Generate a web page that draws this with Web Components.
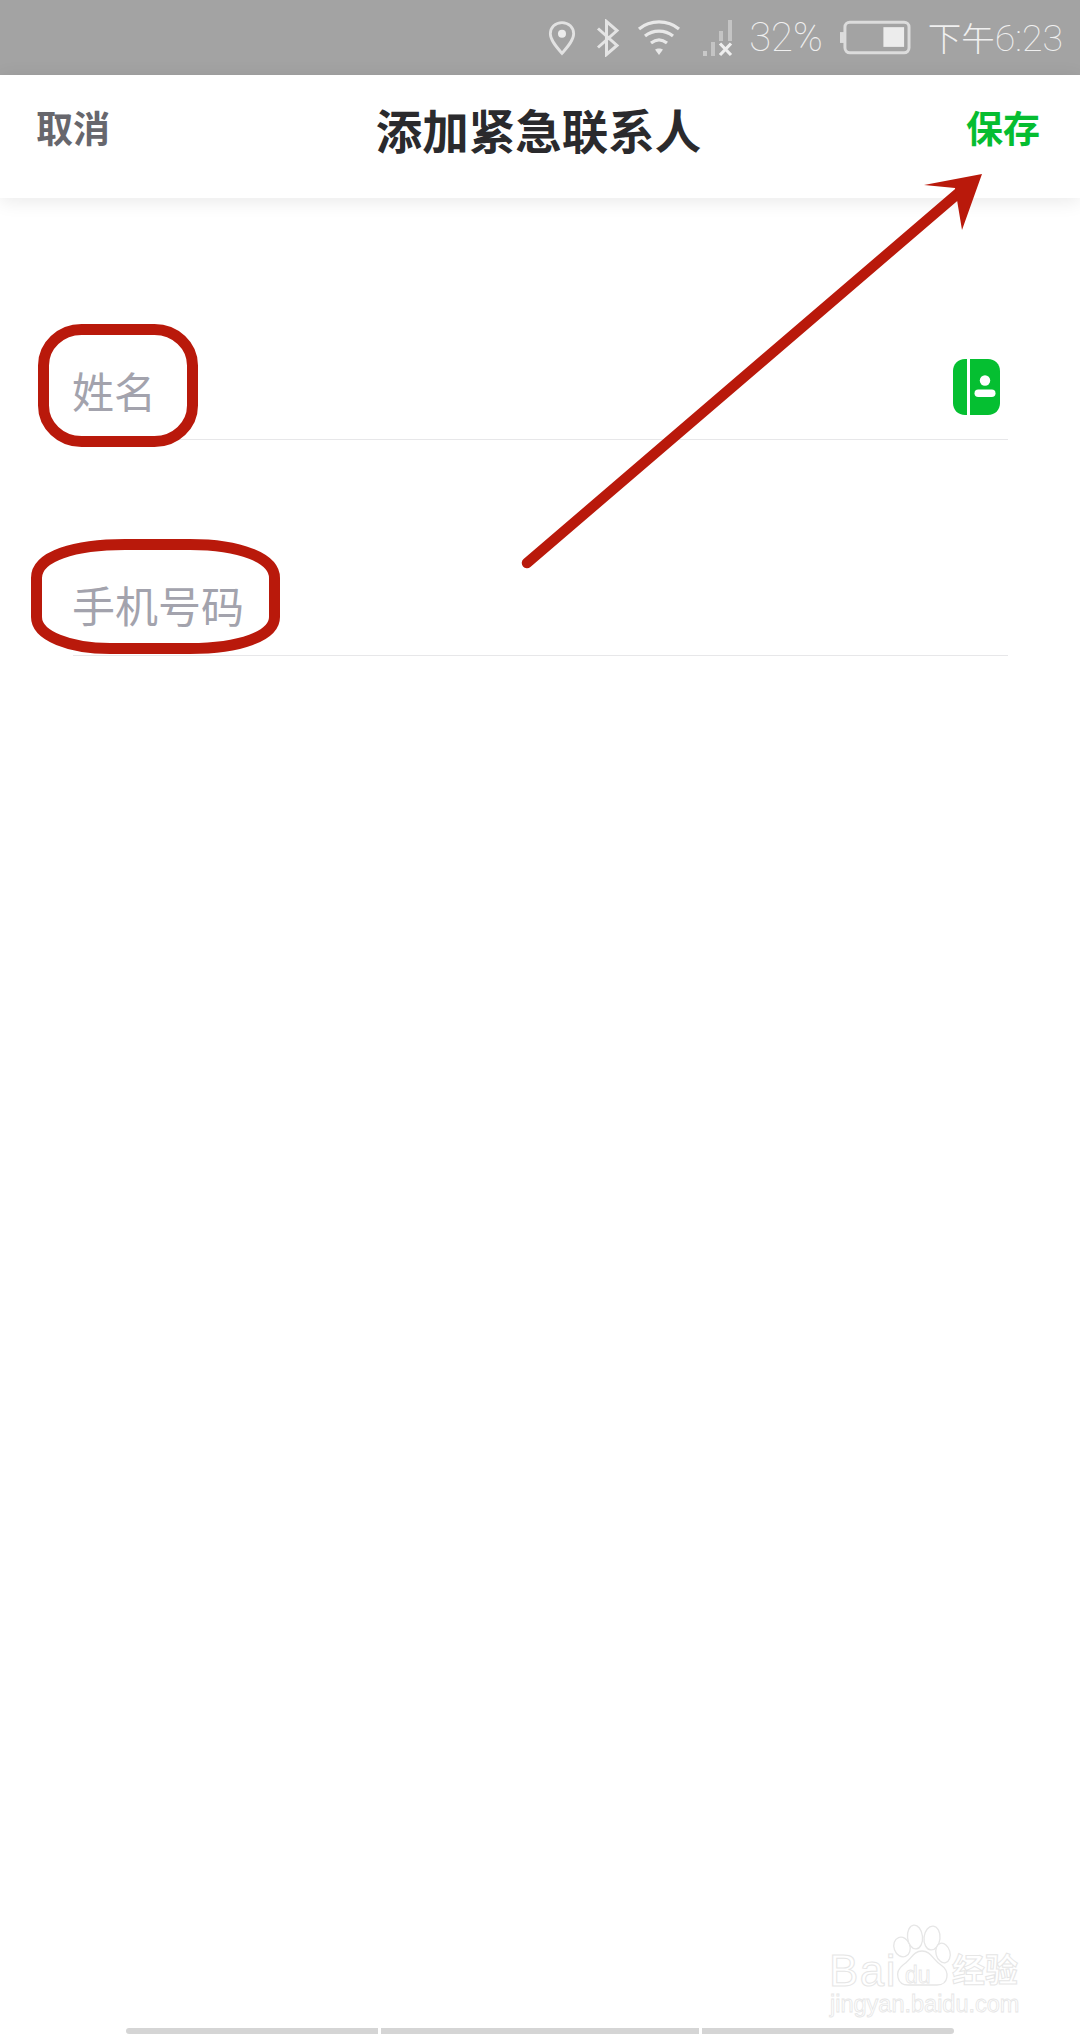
<!DOCTYPE html>
<html lang="zh"><head><meta charset="utf-8"><title>添加紧急联系人</title>
<style>
html,body{margin:0;padding:0;background:#fff}
body{width:1080px;height:2040px;overflow:hidden;position:relative;font-family:"Noto Sans CJK SC","Liberation Sans",sans-serif}
</style></head><body>
<app-page>
  <status-bar></status-bar>
  <nav-bar cancel="取消" title-text="添加紧急联系人" save="保存"></nav-bar>
  <form-list>
    <form-field label="姓名" contact style="--h:242px;--fs:42px;--pb:24px"></form-field>
    <form-field label="手机号码" style="--h:216px;--fs:43px;--pb:26px"></form-field>
  </form-list>
  <home-bars></home-bars>
</app-page>
<baidu-mark></baidu-mark>
<red-notes></red-notes>
<script>
function def(name, html){
  customElements.define(name, class extends HTMLElement{
    connectedCallback(){
      if(this.shadowRoot) return;
      const r=this.attachShadow({mode:'open'});
      r.innerHTML=typeof html==='function'?html(this):html;
    }
  });
}
def('app-page',`<style>:host{display:flex;flex-direction:column;height:2040px}</style><slot></slot>`);
def('status-bar',`<style>
:host{display:flex;align-items:center;justify-content:flex-end;height:75px;background:#a3a3a3;color:#f0f0f0;padding-right:17px;box-sizing:border-box;flex:none}
svg{display:block;flex:none}
.t{font:100 40px/75px Roboto,"Noto Sans CJK SC",sans-serif;white-space:nowrap}
.c{font:300 33.500px/75px "Noto Sans CJK SC",sans-serif}
</style>
<svg width="28" height="38" viewBox="0 0 30 38" style="margin-right:20px" fill="none"><path d="M15 2.500C7.800 2.500 2.500 7.800 2.500 14.500C2.500 21.500 9.500 29 15 35.500C20.500 29 27.500 21.500 27.500 14.500C27.500 7.800 22.200 2.500 15 2.500Z" stroke="#e2e2e2" stroke-width="3"/><circle cx="15" cy="14.500" r="4.300" fill="#ececec"/></svg>
<svg width="24" height="38" viewBox="0 0 24 38" style="margin-right:17px" fill="none" stroke="#e4e4e4" stroke-width="3"><path d="M2 9.500L21 26.500L10.500 35.500V2.500L21 11.500L2 28.500"/></svg>
<svg width="44" height="38" viewBox="0 0 44 38" style="margin-right:22px" fill="none" stroke="#e8e8e8" stroke-width="3.200"><path d="M2 10C13 .5 31 .5 42 10"/><path d="M8 17C16 10.500 28 10.500 36 17"/><path d="M14 24C19 20 25 20 30 24"/><path d="M18 30.500L22 36L26 30.500C24 29 20 29 18 30.500Z" fill="#e8e8e8" stroke="none"/></svg>
<svg width="30" height="38" viewBox="0 0 30 38" style="margin-right:16px"><rect x="0" y="32" width="4" height="5" fill="#c9c9c9"/><rect x="8" y="23" width="4" height="14" fill="#c4c4c4"/><rect x="16" y="12" width="4" height="10" fill="#c4c4c4"/><rect x="25" y="1" width="4" height="21" fill="#c4c4c4"/><path d="M17 24.500L28 36M28 24.500L17 36" stroke="#eeeeee" stroke-width="3.200"/></svg>
<span class="t" style="margin-right:17px">32%</span>
<svg width="71" height="36" viewBox="0 0 72 36" style="margin-right:17px"><rect x="0" y="12" width="4" height="11" fill="#dcdcdc"/><rect x="5" y="2" width="65" height="31" rx="5" fill="none" stroke="#dcdcdc" stroke-width="3"/><rect x="44" y="7" width="21" height="20" fill="#ececec"/></svg>
<span class="t" style="font-size:37.500px"><span class="c">下午</span>6:23</span>`);
def('nav-bar',el=>`<style>
:host{display:flex;align-items:center;justify-content:space-between;position:relative;z-index:1;height:123px;flex:none;background:#fff;box-shadow:0 3px 18px rgba(0,0,0,.09);padding:0 40px 19px 36px;box-sizing:border-box;font-weight:700;font-size:37px}
.c{color:#67676d}.s{color:#06bd31}
.m{position:absolute;inset:0 3px 17px 0;display:flex;align-items:center;justify-content:center;font-size:46.500px;color:#2a2a2d}
</style><span class="c">${el.getAttribute('cancel')}</span><span class="m">${el.getAttribute('title-text')}</span><span class="s">${el.getAttribute('save')}</span>`);
def('form-list',`<style>:host{display:block;padding-left:73px;flex:none}</style><slot></slot>`);
def('form-field',el=>`<style>
:host{display:flex;align-items:flex-end;justify-content:space-between;height:var(--h);box-sizing:border-box;width:935px;border-bottom:1px solid #e7e7e9;color:#a3a3ad;font-size:var(--fs);padding-bottom:var(--pb,22px);padding-right:8px}
svg{display:block;margin-bottom:0}
span{line-height:50px;margin-left:-1px}
</style><span>${el.getAttribute('label')}</span>${el.hasAttribute('contact')?`<svg width="47" height="56" viewBox="0 0 47 56"><path d="M14 0H12C5 0 0 5 0 12V44C0 51 5 56 12 56H14Z" fill="#05bf31"/><path d="M17 0H35C42 0 47 5 47 12V44C47 51 42 56 35 56H17Z" fill="#05bf31"/><circle cx="32" cy="21.500" r="5.200" fill="#fff"/><rect x="21.500" y="30.500" width="21" height="7.500" rx="3.750" fill="#fff"/></svg>`:''}`);
def('home-bars',`<style>
:host{display:flex;gap:3px;margin:auto 0 6px 126px;width:828px;height:6px;flex:none}
i{display:block;height:6px;background:#d5d5d5}
</style><i style="width:252px;border-radius:3px 0 0 3px"></i><i style="width:318px"></i><i style="width:252px;border-radius:0 3px 3px 0"></i>`);
def('baidu-mark',`<style>
:host{position:absolute;left:820px;top:1920px;width:220px;height:105px;display:block}
span{position:absolute;white-space:nowrap;color:#fff;-webkit-text-stroke:1px #e6e6e6;font-family:"Liberation Sans",sans-serif;font-weight:400;line-height:1}
svg{position:absolute;left:0;top:0}
</style>
<svg width="220" height="105" viewBox="0 0 220 105" fill="#fff" stroke="#e6e6e6" stroke-width="1.300"><ellipse cx="82" cy="27" rx="8" ry="10" transform="rotate(-20 82 27)"/><ellipse cx="95" cy="17" rx="7.500" ry="12" transform="rotate(-6 95 17)"/><ellipse cx="112" cy="18" rx="8" ry="12" transform="rotate(6 112 18)"/><ellipse cx="123" cy="33" rx="7" ry="10" transform="rotate(-15 123 33)"/><path d="M102 31C111 31 113 40 121 45C130 51 129 65 117 65H88C77 65 74 52 83 45C91 40 93 31 102 31Z"/></svg>
<span style="left:9px;top:29px;font-size:44px;letter-spacing:1.500px">Bai</span>
<span style="left:85px;top:44px;font-size:23px;-webkit-text-stroke-width:.8px">du</span>
<span style="left:132px;top:32px;font-size:33px;font-family:'Noto Sans CJK SC',sans-serif;font-weight:700">经验</span>
<span style="left:10px;top:73px;font-size:23.500px;-webkit-text-stroke-width:.8px">jingyan.baidu.com</span>`);
def('red-notes',`<style>:host{position:absolute;left:0;top:0;display:block;width:1080px;height:2040px;pointer-events:none;z-index:5}svg{display:block}</style>
<svg width="1080" height="2040" viewBox="0 0 1080 2040" fill="none" stroke="#b9190b">
<rect x="43.500" y="329.500" width="149" height="112" rx="38" ry="36" stroke-width="11"/>
<path d="M36.500 578C36.500 556 75 544.500 125 544.500H190C240 544.500 274.500 558 274.500 578V617C274.500 636 240 648.500 190 648.500H110C70 648.500 36.500 636 36.500 617Z" stroke-width="11"/>
<path d="M527 563L962 190" stroke-width="10.500" stroke-linecap="round"/>
<path d="M982 174L924 185L955 188L962 230Z" fill="#b9190b" stroke="none"/>
</svg>`);
</script>
</body></html>
